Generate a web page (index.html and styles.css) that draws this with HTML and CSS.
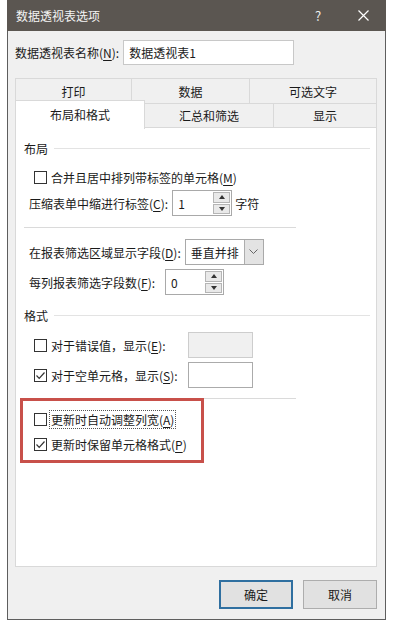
FILE: index.html
```html
<!DOCTYPE html>
<html lang="zh-CN">
<head>
	<meta charset="UTF-8">
	<meta name="viewport" content="width=device-width, initial-scale=1.0">
	<title>数据透视表选项</title>
	<link rel="stylesheet" href="styles.css">
</head>
<body>
	<div id="dialog">
		<div id="titlebar">
			<span class="title">数据透视表选项</span>
			<span class="tb-help">?</span>
			<span class="tb-close">
				<svg width="11" height="11" viewBox="0 0 11 11"><path d="M0.5 0.5L10.5 10.5M10.5 0.5L0.5 10.5" stroke="#fff" stroke-width="1.2" fill="none"/></svg>
			</span>
		</div>

		<div id="content">
			<div class="name-row">
				<span>数据透视表名称(<u>N</u>):</span>
				<div class="name-input">数据透视表1</div>
			</div>

			<div class="tabs">
				<div class="tab-row top">
					<div class="tab w116">打印</div>
					<div class="tab w118">数据</div>
					<div class="tab w128">可选文字</div>
				</div>
				<div class="tab-row bottom">
					<div class="tab w130 active">布局和格式</div>
					<div class="tab w128">汇总和筛选</div>
					<div class="tab w104">显示</div>
				</div>
			</div>

			<div id="panel">
				<div class="group-head first"><span>布局</span><i></i></div>

				<div class="row cb-row gap3">
					<span class="cb"></span>
					<span>合并且居中排列带标签的单元格(<u>M</u>)</span>
				</div>

				<div class="row text-row">
					<span>压缩表单中缩进行标签(<u>C</u>):</span>
					<div class="spin w60">
						<span class="val">1</span>
						<span class="arrows"><b class="up"></b><b class="down"></b></span>
					</div>
					<span class="unit">字符</span>
				</div>

				<div class="sep"></div>

				<div class="row text-row">
					<span>在报表筛选区域显示字段(<u>D</u>):</span>
					<div class="combo">
						<span class="val">垂直并排</span>
						<span class="drop">
							<svg width="9" height="6" viewBox="0 0 9 6"><path d="M0.5 0.5L4.5 4.5L8.5 0.5" stroke="#666" fill="none"/></svg>
						</span>
					</div>
				</div>

				<div class="row text-row gap4">
					<span>每列报表筛选字段数(<u>F</u>):</span>
					<div class="spin w59 ml10">
						<span class="val">0</span>
						<span class="arrows"><b class="up"></b><b class="down"></b></span>
					</div>
				</div>

				<div class="group-head second"><span>格式</span><i></i></div>

				<div class="row cb-row gap4">
					<span class="cb"></span>
					<span class="lbl-fixed">对于错误值，显示(<u>E</u>):</span>
					<div class="field disabled"></div>
				</div>

				<div class="row cb-row gap4">
					<span class="cb checked"><svg width="11" height="11" viewBox="0 0 11 11"><path d="M1.5 5.5L4.2 8.3L9.5 2.5" stroke="#333" stroke-width="1.2" fill="none"/></svg></span>
					<span class="lbl-fixed">对于空单元格，显示(<u>S</u>):</span>
					<div class="field"></div>
				</div>

				<div class="sep sep2"></div>

				<div class="mark">
					<div class="row cb-row">
						<span class="cb"></span>
						<span class="focus">更新时自动调整列宽(<u>A</u>)</span>
					</div>
					<div class="row cb-row">
						<span class="cb checked"><svg width="11" height="11" viewBox="0 0 11 11"><path d="M1.5 5.5L4.2 8.3L9.5 2.5" stroke="#333" stroke-width="1.2" fill="none"/></svg></span>
						<span>更新时保留单元格格式(<u>P</u>)</span>
					</div>
				</div>
			</div>

			<div class="buttons">
				<div class="btn default">确定</div>
				<div class="btn">取消</div>
			</div>
		</div>
	</div>
</body>
</html>
```

FILE: styles.css
```css
:root{
	--text: #1a1a1a;
	--line: #d9d9d9;
	--face: #f0f0f0;
}

body{
	margin: 0;
	background: #fff;
	font-family: "Noto Sans CJK SC", "Microsoft YaHei", sans-serif;
	font-size: 12px;
	color: var(--text);
}

u{
	text-decoration: underline;
	text-underline-offset: 2px;
}

#dialog{
	width: 379px;
	height: 620px;
	margin-left: 7px;
	box-sizing: border-box;
	border: 1px solid #5e5e5e;
	border-top: none;
	background: var(--face);
}

#titlebar{
	height: 31px;
	margin: 0 -1px;
	background: #5b5651;
	color: #fff;
	display: flex;
	align-items: center;
	padding-left: 9px;
}

.title{
	flex: 1;
	font-size: 12px;
	color: #f4f4f4;
}

.tb-help{
	width: 20px;
	text-align: center;
	font-size: 13px;
	color: #eee;
	margin-right: 25px;
}

.tb-close{
	width: 20px;
	display: flex;
	justify-content: center;
	margin-right: 13px;
}

#content{
	padding: 9px 8px 0 7px;
}

.name-row{
	height: 25px;
	display: flex;
	align-items: center;
}

.name-input{
	margin-left: 4px;
	width: 171px;
	height: 25px;
	box-sizing: border-box;
	background: #fff;
	border: 1px solid #c8c8c8;
	display: flex;
	align-items: center;
	padding-left: 5px;
}

.tabs{
	margin-top: 13px;
}

.tab-row{
	display: flex;
}

.tab-row.top{
	height: 25px;
}

.tab-row.bottom{
	height: 24px;
	align-items: flex-start;
}

.tab{
	box-sizing: border-box;
	border-top: 1px solid var(--line);
	border-left: 1px solid var(--line);
	display: flex;
	justify-content: center;
	align-items: center;
	height: 100%;
	background: var(--face);
}

.tab:last-child{
	border-right: 1px solid var(--line);
}

.tab.active{
	position: relative;
	z-index: 1;
	height: 29px;
	margin-top: -3px;
	background: #fff;
	border-right: 1px solid var(--line);
	padding-bottom: 2px;
}

.tab.active + .tab{
	border-left: none;
}

.w116{ width: 116px; }
.w118{ width: 118px; }
.w128{ width: 128px; }
.w130{ width: 130px; }
.w104{ width: 104px; }

#panel{
	height: 440px;
	box-sizing: border-box;
	background: #fff;
	border: 1px solid var(--line);
	padding: 7px 0 0 1px;
}

.group-head{
	height: 26px;
	display: flex;
	align-items: center;
	padding-left: 7px;
}

.group-head i{
	flex: 1;
	height: 1px;
	background: #e3e3e3;
	margin: 0 6px 0 6px;
}

.group-head.second{
	margin-top: 7px;
}

.row{
	height: 26px;
	display: flex;
	align-items: center;
}

.gap3{ margin-top: 3px; }
.gap4{ margin-top: 4px; }

.cb-row{
	padding-left: 17px;
}

.text-row{
	padding-left: 12px;
}

.cb{
	width: 13px;
	height: 13px;
	box-sizing: border-box;
	border: 1px solid #333;
	background: #fff;
	margin-right: 4px;
	display: flex;
	align-items: center;
	justify-content: center;
	flex-shrink: 0;
}

.spin,
.combo{
	height: 26px;
	box-sizing: border-box;
	background: #fff;
	border: 1px solid #a9a9a9;
	display: flex;
	align-items: center;
	margin-left: 4px;
}

.w60{ width: 60px; }
.w59{ width: 59px; }
.ml10{ margin-left: 10px; }

.spin .val,
.combo .val{
	flex: 1;
	padding-left: 5px;
}

.arrows{
	width: 17px;
	height: 22px;
	margin-right: 1px;
	display: flex;
	flex-direction: column;
	gap: 1px;
}

.arrows b{
	flex: 1;
	box-sizing: border-box;
	border: 1px solid #b5b5b5;
	background: #e9e9e9;
	display: flex;
	align-items: center;
	justify-content: center;
}

.arrows b::after{
	content: "";
	border-left: 3px solid transparent;
	border-right: 3px solid transparent;
}

.arrows .up::after{
	border-bottom: 4px solid #333;
}

.arrows .down::after{
	border-top: 4px solid #333;
}

.unit{
	margin-left: 3px;
}

.sep{
	height: 1px;
	width: 272px;
	margin: 11px 0 11px 7px;
	background: #dadada;
}

.combo{
	width: 79px;
	margin-left: 4px;
}

.combo .drop{
	width: 19px;
	height: 24px;
	box-sizing: border-box;
	border-left: 1px solid #adadad;
	background: #e3e3e3;
	display: flex;
	align-items: center;
	justify-content: center;
}

.lbl-fixed{
	width: 137px;
}

.field{
	width: 65px;
	height: 26px;
	box-sizing: border-box;
	border: 1px solid #ababab;
	background: #fff;
}

.field.disabled{
	background: #f0f0f0;
	border-color: #cdcdcd;
}

.sep2{
	margin-top: 10px;
	margin-bottom: 0;
}

.mark{
	width: 184px;
	height: 65px;
	box-sizing: border-box;
	margin: -1px 0 0 3px;
	border: 3px solid #c8504a;
	padding-top: 6px;
}

.mark .cb-row{
	padding-left: 11px;
}

.mark .row{
	height: 25px;
}

.focus{
	outline: 1px dotted #555;
	outline-offset: 0;
	padding: 0 1px;
	margin-left: -1px;
}

.buttons{
	display: flex;
	justify-content: flex-end;
	gap: 10px;
	margin-top: 13px;
}

.btn{
	width: 74px;
	height: 29px;
	box-sizing: border-box;
	background: #e1e1e1;
	border: 1px solid #adadad;
	display: flex;
	align-items: center;
	justify-content: center;
}

.btn.default{
	border: 2px solid #2f6fa0;
}
```
